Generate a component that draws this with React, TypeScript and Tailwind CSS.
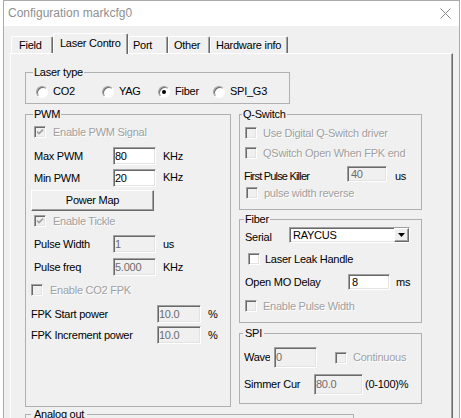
import React from "react";

const sunken =
  "border border-t-[#a0a0a0] border-l-[#a0a0a0] border-r-white border-b-white shadow-[inset_1px_1px_0_#696969,inset_-1px_-1px_0_#e3e3e3]";
const raised =
  "border border-t-white border-l-white border-r-[#696969] border-b-[#696969] shadow-[inset_-1px_-1px_0_#a0a0a0]";
const grayText = "text-[#a0a0a0] [text-shadow:1px_1px_0_#fff]";

function Edit({
  value,
  disabled,
  className,
}: {
  value: string;
  disabled?: boolean;
  className?: string;
}) {
  return (
    <div
      className={`${sunken} flex items-center pl-[1px] shrink-0 overflow-hidden whitespace-nowrap ${
        disabled ? "bg-[#f0f0f0] text-[#6d6d6d]" : "bg-white text-black"
      } ${className ?? ""}`}
    >
      {value}
    </div>
  );
}

function Check({ checked, disabled }: { checked?: boolean; disabled?: boolean }) {
  return (
    <span
      className={`${sunken} w-[12px] h-[12px] shrink-0 flex items-center justify-center ${
        disabled ? "bg-[#f0f0f0]" : "bg-white"
      }`}
    >
      {checked ? (
        <svg width="8" height="8" viewBox="0 0 8 8">
          <path
            d="M1 3.5 L3 5.6 L7 1.6"
            stroke={disabled ? "#a0a0a0" : "#000"}
            strokeWidth="1.7"
            fill="none"
          />
        </svg>
      ) : null}
    </span>
  );
}

function CheckRow({
  label,
  checked,
  disabled,
  className,
  gap = "gap-[6px]",
}: {
  label: string;
  checked?: boolean;
  disabled?: boolean;
  className?: string;
  gap?: string;
}) {
  return (
    <div className={`flex items-center h-[14px] whitespace-nowrap ${gap} ${className ?? ""}`}>
      <Check checked={checked} disabled={disabled} />
      <span className={disabled ? grayText : ""}>{label}</span>
    </div>
  );
}

function Radio({ label, checked, className }: { label: string; checked?: boolean; className?: string }) {
  return (
    <div className={`flex items-center gap-[5px] ${className ?? ""}`}>
      <span className="w-[12px] h-[12px] shrink-0 rounded-full bg-white border border-t-[#a0a0a0] border-l-[#a0a0a0] border-r-white border-b-white shadow-[inset_1px_1px_0_#696969] flex items-center justify-center">
        {checked ? <span className="w-[4px] h-[4px] rounded-full bg-black" /> : null}
      </span>
      <span>{label}</span>
    </div>
  );
}

function Group({
  title,
  legendClass,
  className,
  children,
}: {
  title: string;
  legendClass: string;
  className?: string;
  children?: React.ReactNode;
}) {
  return (
    <fieldset className={`border border-[#b0b0b0] shrink-0 ${className ?? ""}`}>
      <legend className={`leading-[13px] ${legendClass}`}>{title}</legend>
      {children}
    </fieldset>
  );
}

function Tab({ label, selected, className }: { label: string; selected?: boolean; className: string }) {
  return (
    <div
      className={`flex items-center whitespace-nowrap bg-[#f0f0f0] border-t border-l border-r border-t-white border-l-white border-r-[#696969] rounded-t-[2px] shadow-[inset_-1px_0_0_#a0a0a0] ${
        selected ? "h-[21px] relative z-10 -mb-px pb-[2px]" : "h-[17px]"
      } ${className}`}
    >
      {label}
    </div>
  );
}

function PwmGroup() {
  return (
    <Group title="PWM" legendClass="ml-[7px] px-[1px]" className="w-[206px] h-[299px]">
      <CheckRow label="Enable PWM Signal" checked disabled className="mt-[4px] ml-[8px]" gap="gap-[7px]" />

      <div className="flex items-center h-[18px] mt-[8px] ml-[8px]">
        <span className="w-[79px]">Max PWM</span>
        <Edit value="80" className="w-[43px] h-[18px]" />
        <span className="ml-[7px]">KHz</span>
      </div>
      <div className="flex items-center h-[18px] mt-[4px] ml-[8px]">
        <span className="w-[79px]">Min PWM</span>
        <Edit value="20" className="w-[43px] h-[18px]" />
        <span className="ml-[7px] -mt-[2px]">KHz</span>
      </div>

      <div
        className={`${raised} bg-[#f0f0f0] mt-[3px] ml-[5px] w-[123px] h-[21px] flex items-center justify-center`}
      >
        Power Map
      </div>

      <CheckRow label="Enable Tickle" checked disabled className="mt-[3px] ml-[8px]" gap="gap-[7px]" />

      <div className="flex items-center h-[18px] mt-[7px] ml-[8px]">
        <span className="w-[79px]">Pulse Width</span>
        <Edit value="1" disabled className="w-[43px] h-[18px]" />
        <span className="ml-[7px]">us</span>
      </div>
      <div className="flex items-center h-[18px] mt-[5px] ml-[8px]">
        <span className="w-[79px]">Pulse freq</span>
        <Edit value="5.000" disabled className="w-[43px] h-[18px]" />
        <span className="ml-[7px]">KHz</span>
      </div>

      <CheckRow label="Enable CO2 FPK" disabled className="mt-[7px] ml-[5px]" gap="gap-[7px]" />

      <div className="flex items-center h-[18px] mt-[8px] ml-[5px]">
        <span className="w-[126px] whitespace-nowrap">FPK Start power</span>
        <Edit value="10.0" disabled className="w-[44px] h-[18px]" />
        <span className="ml-[7px]">%</span>
      </div>
      <div className="flex items-center h-[18px] mt-[3px] ml-[5px]">
        <span className="w-[126px] whitespace-nowrap">FPK Increment power</span>
        <Edit value="10.0" disabled className="w-[44px] h-[18px]" />
        <span className="ml-[7px]">%</span>
      </div>
    </Group>
  );
}

function QSwitchGroup() {
  return (
    <Group title="Q-Switch" legendClass="ml-[2px] px-[1px]" className="w-[183px] h-[102px]">
      <CheckRow label="Use Digital Q-Switch driver" disabled className="mt-[5px] ml-[5px]" />
      <CheckRow label="QSwitch Open When FPK end" disabled className="mt-[6px] ml-[5px]" />
      <div className="flex items-start h-[16px] mt-[6px] ml-[4px]">
        <span className="w-[103px] pt-[4px] tracking-[-0.8px] whitespace-nowrap">First Pulse Killer</span>
        <Edit value="40" disabled className="w-[40px] h-[16px] pl-[3px]" />
        <span className="ml-[8px] pt-[4px]">us</span>
      </div>
      <CheckRow label="pulse width reverse" disabled className="mt-[4px] ml-[6px]" />
    </Group>
  );
}

function FiberGroup() {
  return (
    <Group title="Fiber" legendClass="ml-[4px] px-[1px]" className="w-[183px] h-[110px] mt-[3px]">
      <div className="flex items-start h-[16px] mt-[1px] ml-[5px]">
        <span className="w-[44px] pt-[4px]">Serial</span>
        <div className={`${sunken} bg-white w-[121px] h-[16px] flex items-stretch`}>
          <span className="flex-1 flex items-center pl-[3px]">RAYCUS</span>
          <span className={`${raised} bg-[#f0f0f0] w-[15px] flex items-center justify-center`}>
            <svg width="7" height="4" viewBox="0 0 7 4">
              <path d="M0 0 H7 L3.5 4 Z" fill="#000" />
            </svg>
          </span>
        </div>
      </div>
      <CheckRow label="Laser Leak Handle" className="mt-[9px] ml-[8px]" gap="gap-[5px]" />
      <div className="flex items-center h-[16px] mt-[8px] ml-[5px]">
        <span className="w-[103px] whitespace-nowrap">Open MO Delay</span>
        <Edit value="8" className="w-[42px] h-[16px] pl-[3px]" />
        <span className="ml-[6px]">ms</span>
      </div>
      <CheckRow label="Enable Pulse Width" disabled className="mt-[9px] ml-[5px]" />
    </Group>
  );
}

function SpiGroup() {
  return (
    <Group title="SPI" legendClass="ml-[3px] px-[2px]" className="w-[183px] h-[77px] mt-[4px]">
      <div className="flex items-center h-[21px] mt-[7px] ml-[4px]">
        <span className="w-[26px] overflow-hidden whitespace-nowrap">Wave</span>
        <Edit value="0" disabled className="w-[43px] h-[21px] ml-[4px]" />
        <div className="ml-[18px]">
          <CheckRow label="Continuous" disabled />
        </div>
      </div>
      <div className="flex items-center h-[21px] mt-[6px] ml-[4px]">
        <span className="w-[70px] whitespace-nowrap">Simmer Cur</span>
        <Edit value="80.0" disabled className="w-[49px] h-[21px]" />
        <span className="ml-[2px] whitespace-nowrap">(0-100)%</span>
      </div>
    </Group>
  );
}

export default function App() {
  return (
    <div className="w-[461px] h-[418px] bg-white overflow-hidden font-['Liberation_Sans',Arial,sans-serif] text-[11px] leading-[13px] tracking-[-0.25px] text-black">
      <div className="ml-[3px] w-[457px] h-[418px] border-l border-r border-t border-[#aaaaaa] flex flex-col">
        <div className="h-[25px] shrink-0 bg-white flex items-center justify-between pl-[4px] pr-[8px]">
          <span className="text-[12px] tracking-normal text-[#8f8f8f]">Configuration markcfg0</span>
          <svg width="11" height="11" viewBox="0 0 11 11">
            <path d="M0.5 0.5 L10.5 10.5 M10.5 0.5 L0.5 10.5" stroke="#8a8a8a" strokeWidth="1" />
          </svg>
        </div>

        <div className="flex-1 bg-[#f0f0f0] pt-[7px]">
          <div className="flex items-end h-[20px] ml-[7px]">
            <Tab label="Field" className="w-[42px] pl-[7px]" />
            <Tab label="Laser Contro" selected className="w-[75px] pl-[6px]" />
            <Tab label="Port" className="w-[40px] pl-[4px]" />
            <Tab label="Other" className="w-[42px] pl-[5px]" />
            <Tab label="Hardware info" className="w-[78px] pl-[5px]" />
          </div>

          <div className="ml-[6px] w-[443px] h-[380px] border-t border-l border-r border-t-white border-l-white border-r-[#696969] shadow-[inset_-1px_0_0_#a0a0a0] pl-[14px] pt-[12px]">
            <Group title="Laser type" legendClass="ml-[7px] px-[1px]" className="w-[265px] h-[38px]">
              <div className="flex items-center mt-[6px] ml-[10px]">
                <Radio label="CO2" className="w-[66px]" />
                <Radio label="YAG" className="w-[56px]" />
                <Radio label="Fiber" checked className="w-[55px]" />
                <Radio label="SPI_G3" />
              </div>
            </Group>

            <div className="flex gap-[8px] mt-[4px]">
              <PwmGroup />
              <div className="flex flex-col">
                <QSwitchGroup />
                <FiberGroup />
                <SpiGroup />
              </div>
            </div>

            <Group title="Analog out" legendClass="ml-[5px] px-[3px]" className="w-[329px] h-[40px] mt-[1px]" />
          </div>
        </div>
      </div>
    </div>
  );
}
